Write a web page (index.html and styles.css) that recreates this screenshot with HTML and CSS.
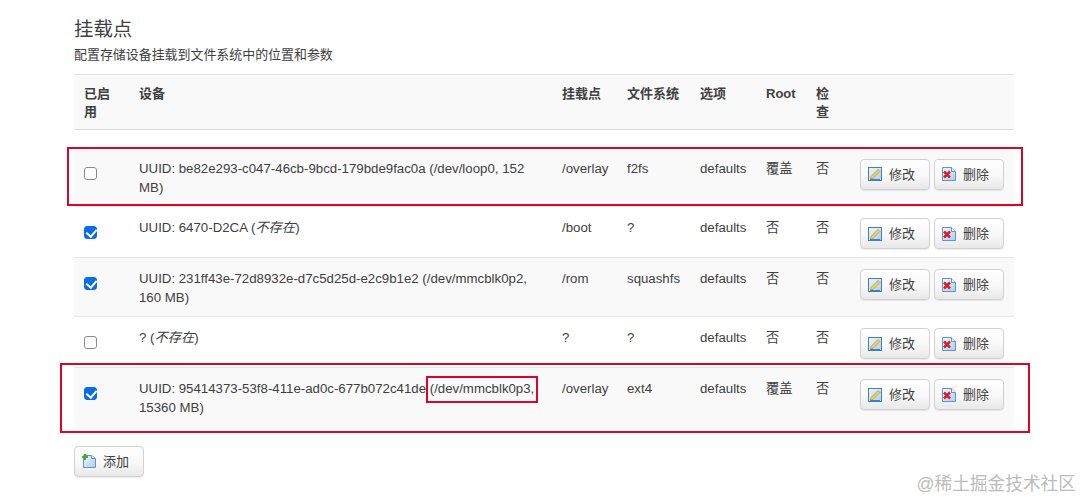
FILE: index.html
```html
<!DOCTYPE html>
<html lang="zh-CN">
<head>
<meta charset="utf-8">
<title>挂载点</title>
<link rel="stylesheet" href="styles.css">
</head>
<body>
<svg class="defs" width="0" height="0" aria-hidden="true">
  <defs>
    <linearGradient id="g-blue" x1="0" y1="0" x2="1" y2="1">
      <stop offset="0" stop-color="#f2f8fe"/>
      <stop offset="1" stop-color="#a9cdf0"/>
    </linearGradient>
  </defs>
  <symbol id="i-edit" viewBox="0 0 14 14">
    <rect x=".5" y=".5" width="13" height="13" fill="url(#g-blue)" stroke="#3f7fc0"/>
    <path d="M3 9.500 10 2.500l2 2L5 11.500 2.500 12z" fill="#f2cf5a" stroke="#9c8a3c" stroke-width=".6"/>
    <path d="M2 12.500h10" stroke="#3f7fc0"/>
  </symbol>
  <symbol id="i-del" viewBox="0 0 14 14">
    <path d="M.5.500h9l4 4v9H.5z" fill="url(#g-blue)" stroke="#5f94cc"/>
    <path d="M9.500.500v4h4" fill="#fff" stroke="#5f94cc"/>
    <path d="M2 4.500 8 10.500M8 4.500 2 10.500" stroke="#d8202a" stroke-width="2.500"/>
  </symbol>
  <symbol id="i-add" viewBox="0 0 14 14">
    <path d="M1.500 1.500h8l4 3v9h-12z" fill="url(#g-blue)" stroke="#5f94cc"/>
    <path d="M9.500 1.500v3h4" fill="#fff" stroke="#5f94cc"/>
    <path d="M3 0v6M0 3h6" stroke="#4fa632" stroke-width="2"/>
  </symbol>
</svg>

<h2 class="title">挂载点</h2>
<p class="desc">配置存储设备挂载到文件系统中的位置和参数</p>

<table class="mounts">
  <colgroup>
    <col class="c-on"><col class="c-dev"><col class="c-mnt"><col class="c-fs"><col class="c-opt"><col class="c-root"><col class="c-chk"><col class="c-act">
  </colgroup>
  <thead>
    <tr><th>已启用</th><th>设备</th><th>挂载点</th><th>文件系统</th><th>选项</th><th>Root</th><th>检查</th><th></th></tr>
  </thead>
  <tbody>
    <tr class="spacer"><td colspan="8"></td></tr>
    <tr class="row tall odd">
      <td><input type="checkbox" class="cb"></td>
      <td>UUID: be82e293-c047-46cb-9bcd-179bde9fac0a (/dev/loop0, 152 MB)</td>
      <td>/overlay</td><td>f2fs</td><td>defaults</td><td>覆盖</td><td>否</td>
      <td class="act"><button class="btn"><svg class="ico"><use href="#i-edit"/></svg>修改</button><button class="btn"><svg class="ico"><use href="#i-del"/></svg>删除</button></td>
    </tr>
    <tr class="row">
      <td><input type="checkbox" class="cb" checked></td>
      <td>UUID: 6470-D2CA (<em>不存在</em>)</td>
      <td>/boot</td><td>?</td><td>defaults</td><td>否</td><td>否</td>
      <td class="act"><button class="btn"><svg class="ico"><use href="#i-edit"/></svg>修改</button><button class="btn"><svg class="ico"><use href="#i-del"/></svg>删除</button></td>
    </tr>
    <tr class="row tall odd">
      <td><input type="checkbox" class="cb" checked></td>
      <td>UUID: 231ff43e-72d8932e-d7c5d25d-e2c9b1e2 (/dev/mmcblk0p2, 160 MB)</td>
      <td>/rom</td><td>squashfs</td><td>defaults</td><td>否</td><td>否</td>
      <td class="act"><button class="btn"><svg class="ico"><use href="#i-edit"/></svg>修改</button><button class="btn"><svg class="ico"><use href="#i-del"/></svg>删除</button></td>
    </tr>
    <tr class="row">
      <td><input type="checkbox" class="cb"></td>
      <td>? (<em>不存在</em>)</td>
      <td>?</td><td>?</td><td>defaults</td><td>否</td><td>否</td>
      <td class="act"><button class="btn"><svg class="ico"><use href="#i-edit"/></svg>修改</button><button class="btn"><svg class="ico"><use href="#i-del"/></svg>删除</button></td>
    </tr>
    <tr class="row tall odd last">
      <td><input type="checkbox" class="cb" checked></td>
      <td>UUID: 95414373-53f8-411e-ad0c-677b072c41de (/dev/mmcblk0p3, 15360 MB)</td>
      <td>/overlay</td><td>ext4</td><td>defaults</td><td>覆盖</td><td>否</td>
      <td class="act"><button class="btn"><svg class="ico"><use href="#i-edit"/></svg>修改</button><button class="btn"><svg class="ico"><use href="#i-del"/></svg>删除</button></td>
    </tr>
  </tbody>
</table>

<button class="btn add"><svg class="ico"><use href="#i-add"/></svg>添加</button>

<div class="mark mark-a"></div>
<div class="mark mark-b"></div>
<div class="mark mark-c"></div>
<div class="watermark">@稀土掘金技术社区</div>
</body>
</html>
```
FILE: styles.css
```css
* { box-sizing: border-box; }
html, body { height: 100%; }
body {
  margin: 0;
  padding: 17px 70px 0 74px;
  position: relative;
  overflow: hidden;
  background: #fff;
  color: #404040;
  font: 13px/19px "Liberation Sans", "Noto Sans CJK SC", sans-serif;
}
.defs { position: absolute; }
.title {
  margin: 0;
  font-size: 19.400px;
  font-weight: 400;
  line-height: 24px;
  color: #404040;
}
.desc { margin: 4px 0 0; height: 29px; line-height: 20px; font-size: 12.950px; }
.mounts {
  width: 940px;
  table-layout: fixed;
  border-collapse: collapse;
  border-top: 1px solid #e2e2e2;
  font-size: 13.250px;
}
.c-on { width: 55px; }
.c-dev { width: 423px; }
.c-mnt { width: 65px; }
.c-fs { width: 73px; }
.c-opt { width: 66px; }
.c-root { width: 50px; }
.c-chk { width: 44px; }
.c-act { width: 164px; }
th, td { padding: 10px 10px 0; text-align: left; vertical-align: top; }
thead tr { height: 55px; background: #f9f9f9; border-bottom: 1px solid #ddd; }
th { font-weight: 700; line-height: 18px; font-size: 13px; }
.spacer { height: 18px; }
.spacer td { padding: 0; }
.row { height: 51px; border-bottom: 1px solid #e6e6e6; }
.row.tall { height: 59px; }
.row.odd { background: #f9f9f9; }
.row.last { border-bottom: 0; height: 61px; }
.row td { padding-top: 11px; }
em { font-style: italic; }
.cb {
  appearance: none;
  display: block;
  width: 13px;
  height: 13px;
  margin: 8px 0 0;
  border: 1px solid #8a8a8a;
  border-radius: 3px;
  background: #fff;
  position: relative;
}
.cb:checked { background: #0b6ce8; border-color: #0b6ce8; }
.cb:checked::after {
  content: "";
  position: absolute;
  left: 3px;
  top: 0;
  width: 5px;
  height: 8px;
  border: solid #fff;
  border-width: 0 2.500px 2.500px 0;
  transform: rotate(40deg);
}
.act { white-space: nowrap; padding-right: 0; }
.btn {
  display: inline-flex;
  align-items: center;
  width: 70px;
  height: 31px;
  padding: 0 0 0 7px;
  border: 1px solid #d2d2d2;
  border-radius: 4px;
  background: linear-gradient(#fff 0%, #f8f8f8 55%, #e8e8e8 100%);
  box-shadow: 0 1px 1px rgba(0, 0, 0, .08);
  color: #404040;
  font: inherit;
  font-size: 13px;
}
.btn + .btn { margin-left: 4px; }
.ico { width: 14px; height: 14px; margin-right: 7px; flex: none; }
.add { display: flex; margin-top: 17px; }
.mark { position: absolute; border: 2px solid #d8062a; pointer-events: none; }
.mark-a { left: 67px; top: 147px; width: 956px; height: 59px; }
.mark-b { left: 60px; top: 363px; width: 970px; height: 70px; }
.mark-c { left: 426px; top: 376px; width: 112px; height: 27px; }
.watermark {
  position: absolute;
  right: 8px;
  top: 472px;
  font-size: 17.700px;
  line-height: 24px;
  color: #bcbcbc;
}
```
